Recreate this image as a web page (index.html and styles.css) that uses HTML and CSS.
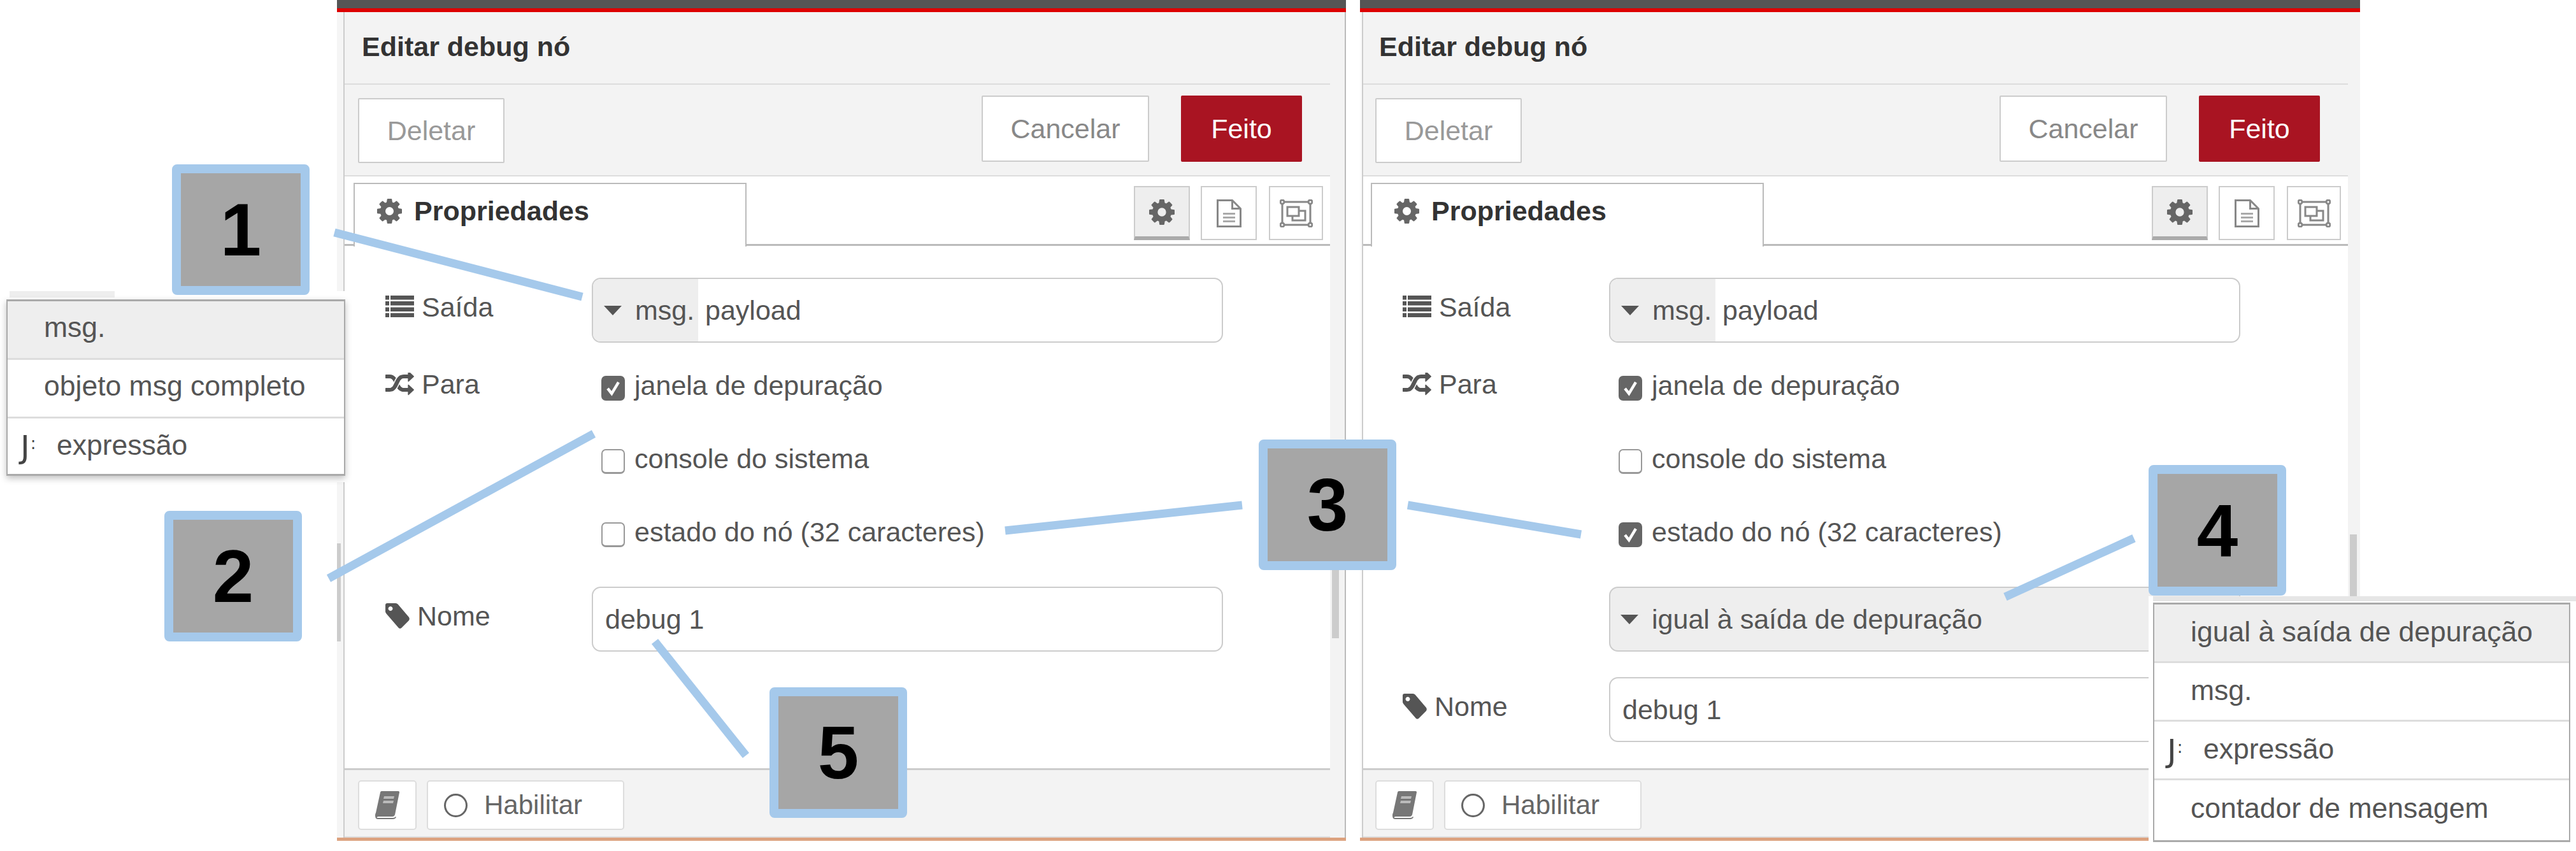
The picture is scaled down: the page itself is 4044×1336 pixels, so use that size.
FILE: index.html
```html
<!DOCTYPE html>
<html lang="pt">
<head>
<meta charset="utf-8">
<title>Editar debug nó</title>
<link rel="stylesheet" href="styles.css">
</head>
<body>
<svg width="0" height="0" class="defs" aria-hidden="true">
  <defs>
    <symbol id="cog" viewBox="0 0 1536 1536"><path d="M1024 768q0-106-75-181t-181-75-181 75-75 181 75 181 181 75 181-75 75-181zm512-109v222q0 12-8 23t-20 13l-185 28q-19 54-39 91 35 50 107 138 10 12 10 25t-9 23q-27 37-99 108t-94 71q-12 0-26-9l-138-108q-44 23-91 38-16 136-29 186-7 28-36 28h-222q-14 0-24.500-8.500t-11.500-21.500l-28-184q-49-16-90-37l-141 107q-10 9-25 9-14 0-25-11-126-114-165-168-7-10-7-23 0-12 8-23 15-21 51-66.500t54-70.500q-27-50-41-99l-183-27q-13-2-21-12.500t-8-23.500v-222q0-12 8-23t19-13l186-28q14-46 39-92-40-57-107-138-10-12-10-24 0-10 9-23 26-36 98.500-107.500t94.500-71.500q13 0 26 10l138 107q44-23 91-38 16-136 29-186 7-28 36-28h222q14 0 24.500 8.500t11.500 21.500l28 184q49 16 90 37l142-107q9-9 24-9 13 0 25 10 129 119 165 170 7 8 7 22 0 12-8 23-15 21-51 66.500t-54 70.500q26 50 41 98l183 28q13 2 21 12.500t8 23.500z"/></symbol>
    <symbol id="list" viewBox="0 0 45 34"><path d="M0 0h6v6.500H0zM8 0h37v6.500H8zM0 9h6v6.500H0zM8 9h37v6.500H8zM0 18.500h6V25H0zM8 18.500h37V25H8zM0 27.500h6V34H0zM8 27.500h37V34H8z"/></symbol>
    <symbol id="random" viewBox="0 128 1792 1536" preserveAspectRatio="none"><path d="M666 481q-60 92-137 273-22-45-37-72.500t-40.500-63.500-51-56.500-63-35-81.500-14.500h-224q-14 0-23-9t-9-23v-192q0-14 9-23t23-9h224q250 0 410 225zm1126 799q0 14-9 23l-320 320q-9 9-23 9-13 0-22.500-9.500t-9.500-22.500v-192q-32 0-85 .5t-81 1-73-1-71-5-64-10.500-63-18.500-58-28.500-59-40-55-53.500-56-69.500q59-93 136-273 22 45 37 72.500t40.500 63.500 51 56.500 63 35 81.500 14.500h256v-192q0-14 9-23t23-9q12 0 24 10l319 319q9 9 9 23zm0-896q0 14-9 23l-320 320q-9 9-23 9-13 0-22.500-9.500t-9.500-22.500v-192h-256q-48 0-87 15t-69 45-51 61.500-45 77.500q-32 62-78 171-29 66-49.500 111t-54 105-64 100-74 83-90 68.500-106.500 42-128 16.500h-224q-14 0-23-9t-9-23v-192q0-14 9-23t23-9h224q48 0 87-15t69-45 51-61.500 45-77.500q32-62 78-171 29-66 49.500-111t54-105 64-100 74-83 90-68.500 106.500-42 128-16.500h256v-192q0-14 9-23t23-9q12 0 24 10l319 319q9 9 9 23z"/></symbol>
    <symbol id="tag" viewBox="0 0 38 40"><path fill-rule="evenodd" d="M3 0h13c2 0 3 1 4 2l17 20c1 2 1 3 0 5L25 39c-1 1-3 1-4 0L2 17c-1-1-2-3-2-4V3c0-2 1-3 3-3zM8 5a3.500 3.500 0 1 0 .01 0z"/></symbol>
    <symbol id="book" viewBox="0 0 38 44"><path d="M10 0h26c2 0 2 1 2 2l-7 35c-1 2-2 3-4 3H5c-2 0-3 2-2 2h25c2 0 3-1 4-2l1 1c-1 2-3 3-5 3H4c-3 0-4-3-4-6 0-1 0-2 1-4L8 2c0-1 1-2 2-2z"/><path d="M14 8h16l-1 4H13zM13 15h16l-1 4H12z" fill="#bbb"/></symbol>
    <symbol id="doc" viewBox="0 0 39 44"><path d="M1.500 1.500h23l13 13v28h-36zM24.500 1.500v13h13" fill="none" stroke="#888" stroke-width="3"/><path d="M10 21h19v3H10zM10 27h19v3H10zM10 33h19v3H10z" fill="#aaa"/></symbol>
    <symbol id="group" viewBox="0 0 52 44"><g fill="none" stroke="#888" stroke-width="3"><path d="M6 4h40M6 40h40M4 6v32M48 6v32"/><circle cx="4" cy="4" r="3"/><circle cx="48" cy="4" r="3"/><circle cx="4" cy="40" r="3"/><circle cx="48" cy="40" r="3"/><path d="M12 12h18v14H12z"/><path d="M30 18h10v15H20v-7"/></g></symbol>
    <symbol id="tick" viewBox="0 0 37 38"><path d="M9 20l7 9L28 9" fill="none" stroke="#fff" stroke-width="5"/></symbol>
  </defs>
</svg>

<main class="stage">
  <section class="panel panel-a">
    <div class="bar"></div>
    <div class="body">
      <div class="gutter-left"><span class="thumb thumb-left"></span></div>
      <div class="main">
        <header class="head">Editar debug nó</header>
        <div class="toolbar">
          <button class="btn btn-delete">Deletar</button>
          <div class="actions">
            <button class="btn btn-cancel">Cancelar</button>
            <button class="btn btn-done">Feito</button>
          </div>
        </div>
        <div class="tabs">
          <div class="tab"><svg class="ic-tab"><use href="#cog"/></svg>Propriedades</div>
          <div class="tab-tools">
            <span class="tool tool-on"><svg class="ic-cog"><use href="#cog"/></svg></span>
            <span class="tool"><svg class="ic-doc"><use href="#doc"/></svg></span>
            <span class="tool tool-last"><svg class="ic-group"><use href="#group"/></svg></span>
          </div>
        </div>
        <form class="form">
          <div class="row row-first">
            <div class="label"><svg class="ic-list"><use href="#list"/></svg>Saída</div>
            <div class="field"><span class="prefix"><i class="caret"></i>msg.</span><span class="value">payload</span></div>
          </div>
          <div class="row row-checks">
            <div class="label label-check"><svg class="ic-random"><use href="#random"/></svg>Para</div>
            <div class="checks">
              <div class="check"><span class="box box-on"><svg><use href="#tick"/></svg></span>janela de depuração</div>
              <div class="check"><span class="box"></span>console do sistema</div>
              <div class="check"><span class="box"></span>estado do nó (32 caracteres)</div>
            </div>
          </div>
          <div class="row row-name">
            <div class="label"><svg class="ic-tag"><use href="#tag"/></svg>Nome</div>
            <div class="field field-plain"><span class="value">debug 1</span></div>
          </div>
        </form>
        <footer class="foot">
          <span class="foot-btn foot-book"><svg class="ic-book"><use href="#book"/></svg></span>
          <span class="foot-btn foot-enable"><i class="ring"></i>Habilitar</span>
        </footer>
      </div>
      <div class="gutter-right"><span class="thumb thumb-right"></span></div>
    </div>
    <div class="edge"></div>
  </section>

  <section class="panel panel-b">
    <div class="bar"></div>
    <div class="body">
      <div class="gutter-left"></div>
      <div class="main">
        <header class="head">Editar debug nó</header>
        <div class="toolbar">
          <button class="btn btn-delete">Deletar</button>
          <div class="actions">
            <button class="btn btn-cancel">Cancelar</button>
            <button class="btn btn-done">Feito</button>
          </div>
        </div>
        <div class="tabs">
          <div class="tab"><svg class="ic-tab"><use href="#cog"/></svg>Propriedades</div>
          <div class="tab-tools">
            <span class="tool tool-on"><svg class="ic-cog"><use href="#cog"/></svg></span>
            <span class="tool"><svg class="ic-doc"><use href="#doc"/></svg></span>
            <span class="tool tool-last"><svg class="ic-group"><use href="#group"/></svg></span>
          </div>
        </div>
        <form class="form">
          <div class="row row-first">
            <div class="label"><svg class="ic-list"><use href="#list"/></svg>Saída</div>
            <div class="field"><span class="prefix"><i class="caret"></i>msg.</span><span class="value">payload</span></div>
          </div>
          <div class="row row-checks">
            <div class="label label-check"><svg class="ic-random"><use href="#random"/></svg>Para</div>
            <div class="checks">
              <div class="check"><span class="box box-on"><svg><use href="#tick"/></svg></span>janela de depuração</div>
              <div class="check"><span class="box"></span>console do sistema</div>
              <div class="check"><span class="box box-on"><svg><use href="#tick"/></svg></span>estado do nó (32 caracteres)</div>
            </div>
          </div>
          <div class="row row-select">
            <div class="label"></div>
            <div class="field field-select"><i class="caret"></i>igual à saída de depuração</div>
          </div>
          <div class="row row-name-b">
            <div class="label"><svg class="ic-tag"><use href="#tag"/></svg>Nome</div>
            <div class="field field-plain"><span class="value">debug 1</span></div>
          </div>
        </form>
        <footer class="foot">
          <span class="foot-btn foot-book"><svg class="ic-book"><use href="#book"/></svg></span>
          <span class="foot-btn foot-enable"><i class="ring"></i>Habilitar</span>
        </footer>
      </div>
      <div class="gutter-right"><span class="thumb thumb-right-b"></span></div>
    </div>
    <div class="edge"></div>
  </section>

  <svg class="lines" width="4044" height="1336" aria-hidden="true">
    <g stroke="#a5c9eb" stroke-width="13" fill="none">
      <path d="M525 365L914 466"/>
      <path d="M516 908L932 681"/>
      <path d="M1578 833L1950 793"/>
      <path d="M2210 793L2482 839"/>
      <path d="M3350 845L3148 937"/>
      <path d="M1028 1007L1171 1186"/>
    </g>
  </svg>

  <div class="popup popup-a">
    <span class="sliver"></span>
    <ul class="menu menu-a">
      <li class="item item-on">msg.</li>
      <li class="item">objeto msg completo</li>
      <li class="item item-j"><span class="j">J<small>:</small></span>expressão</li>
    </ul>
  </div>
  <div class="popup popup-b">
    <ul class="menu menu-b">
      <li class="item item-on">igual à saída de depuração</li>
      <li class="item">msg.</li>
      <li class="item item-j"><span class="j">J<small>:</small></span>expressão</li>
      <li class="item">contador de mensagem</li>
    </ul>
  </div>

  <div class="badge badge-1">1</div>
  <div class="badge badge-2">2</div>
  <div class="badge badge-3">3</div>
  <div class="badge badge-4">4</div>
  <div class="badge badge-5">5</div>
</main>
</body>
</html>
```
FILE: styles.css
```css
* { box-sizing: border-box; }
html, body { margin: 0; padding: 0; background: #fff; }
body { font-family: "Liberation Sans", Arial, sans-serif; font-size: 43px; color: #555; }
.defs { position: absolute; }
svg { display: block; flex: none; fill: currentColor; }

.stage { position: relative; width: 4044px; height: 1336px; overflow: hidden; display: flex; align-items: flex-start; padding-left: 529px; gap: 22px; }

.panel { height: 1320px; display: flex; flex-direction: column; flex: none; }
.panel-a { width: 1584px; }
.panel-b { width: 1570px; }
.bar { height: 19px; flex: none; background: #555; border-bottom: 6px solid #dd0000; }
.body { flex: 1; display: flex; min-height: 0; }
.edge { height: 5px; flex: none; background: #dca27f; }

.gutter-left { flex: none; background: #f5f5f5; border-right: 2px solid #ccc; position: relative; }
.panel-a .gutter-left { width: 12px; }
.panel-b .gutter-left { width: 5px; background: #fafafa; }
.gutter-right { flex: none; background: #f3f3f3; position: relative; }
.panel-a .gutter-right { width: 25px; border-right: 2px solid #bbb; box-shadow: inset -3px 0 0 #f3f3f3; }
.panel-b .gutter-right { width: 19px; }
.thumb { position: absolute; background: #ccc; }
.thumb-left { left: 0; top: 834px; width: 6px; height: 154px; }
.thumb-right { left: 3px; top: 845px; width: 11px; height: 138px; }
.thumb-right-b { left: 3px; top: 820px; width: 11px; height: 150px; }

.main { flex: 1; min-width: 0; display: flex; flex-direction: column; background: #fff; }

.head { height: 114px; flex: none; background: #f3f3f3; border-bottom: 2px solid #ddd; font-weight: 700; color: #333; padding: 31px 0 0 27px; line-height: 46px; }
.panel-b .head { padding-left: 25px; }

.toolbar { height: 144px; flex: none; background: #f3f3f3; border-bottom: 2px solid #ddd; display: flex; justify-content: space-between; align-items: flex-start; padding: 21px 44px 0 21px; }
.panel-b .toolbar { padding-left: 19px; }
.actions { display: flex; gap: 50px; margin-top: -4px; }
.btn { font: inherit; border: 2px solid #ccc; background: #fff; color: #999; padding: 0; display: block; border-radius: 2px; }
.btn-delete { width: 230px; height: 102px; }
.btn-cancel { width: 263px; height: 104px; color: #888; }
.btn-done { width: 190px; height: 104px; color: #fff; background: #a91422; border-color: #a91422; }

.tabs { height: 109px; flex: none; display: flex; justify-content: space-between; align-items: flex-start; padding: 10px 11px 0 14px; border-bottom: 3px solid #bbb; }
.panel-b .tabs { padding-left: 12px; }
.tab { width: 617px; height: 100px; background: #fff; border: 2px solid #bbb; border-bottom: 0; margin-bottom: -3px; position: relative; font-weight: 700; color: #333; display: flex; align-items: flex-start; padding: 18px 0 0 35px; line-height: 49px; }
.ic-tab { width: 39px; height: 39px; margin: 5px 19px 0 0; color: #666; }
.tab-tools { display: flex; margin-top: 5px; }
.tool { width: 88px; height: 85px; border: 2px solid #ccc; background: #fff; display: flex; align-items: center; justify-content: center; margin-right: 19px; }
.tool-on { background: #eee; border-bottom: 6px solid #aaa; margin-right: 17px; }
.tool-last { width: 85px; margin-right: 0; }
.ic-cog { width: 40px; height: 40px; color: #666; }
.ic-doc { width: 39px; height: 44px; }
.ic-group { width: 52px; height: 44px; }

.form { flex: 1; min-height: 0; padding: 0 0 0 64px; background: #fff; }
.panel-b .form { padding-left: 62px; }
.row { display: flex; width: 1315px; }
.row-first { margin-top: 50px; }
.row-checks { margin-top: 13px; }
.row-name { margin-top: 25px; }
.row-select { margin-top: 25px; }
.row-name-b { margin-top: 40px; }
.label { width: 324px; flex: none; display: flex; align-items: center; padding-bottom: 10px; gap: 12px; }
.label-check { align-items: flex-start; padding: 28px 0 0; height: 115px; }
.ic-list { width: 45px; height: 34px; margin-top: -3px; }
.ic-random { width: 45px; height: 36px; margin-top: 6px; }
.ic-tag { width: 38px; height: 40px; color: #555; }

.field { flex: 1; height: 102px; border: 2px solid #ccc; border-radius: 14px; display: flex; align-items: center; overflow: hidden; background: #fff; }
.prefix { width: 165px; height: 100%; background: #eee; display: flex; align-items: center; padding-left: 17px; flex: none; }
.value { padding-left: 11px; }
.field-plain .value { padding-left: 19px; }
.caret { display: block; flex: none; width: 0; height: 0; border-left: 14px solid transparent; border-right: 14px solid transparent; border-top: 15px solid #555; margin-right: 21px; }
.field-select { background: #eee; padding-left: 16px; }

.checks { flex: 1; padding-left: 15px; }
.check { height: 115px; display: flex; align-items: center; gap: 15px; padding-bottom: 6px; }
.box { width: 37px; height: 39px; border: 2px solid #999; border-bottom-width: 3px; border-radius: 7px; background: #fff; flex: none; margin-top: 7px; }
.box svg { width: 33px; height: 34px; }
.box-on { background: #666; border-color: #666; }

.foot { height: 109px; flex: none; background: #f3f3f3; border-top: 3px solid #ccc; border-bottom: 2px solid #ddd; display: flex; align-items: flex-start; gap: 16px; padding: 16px 0 0 21px; }
.panel-b .foot { padding-left: 19px; }
.foot-btn { height: 78px; background: #fff; border: 2px solid #ddd; border-radius: 5px; display: flex; align-items: center; color: #666; font-size: 42px; }
.foot-book { width: 92px; justify-content: center; }
.ic-book { width: 38px; height: 44px; color: #777; }
.foot-enable { width: 310px; padding-left: 25px; gap: 26px; }
.ring { display: block; width: 37px; height: 37px; border: 3px solid #666; border-radius: 50%; flex: none; }

.lines { position: absolute; left: 0; top: 0; }

.popup { position: absolute; background: #fff; }
.popup-a { left: 0; top: 457px; width: 555px; height: 300px; padding: 13px 13px 0 10px; }
.sliver { position: absolute; left: 15px; top: 0; width: 165px; height: 10px; background: #eee; }
.popup-b { left: 3373px; top: 936px; width: 671px; height: 400px; padding-left: 7px; }
.popup-b::before { content: ""; position: absolute; left: 7px; right: 0; top: 0; height: 8px; background: #e6e6e6; }
.menu { list-style: none; margin: 0; padding: 0; border: 2px solid #aaa; border-top-width: 3px; background: #fff; position: relative; }
.menu-a { height: 277px; box-shadow: 0 4px 10px rgba(0, 0, 0, .25); border-bottom-width: 3px; }
.menu-b { width: 655px; height: 376px; top: 10px; border-bottom-width: 3px; }
.item { display: flex; align-items: center; border-bottom: 3px solid #ddd; padding-left: 57px; font-size: 44.500px; }
.menu-a .item { height: 92px; padding-bottom: 8px; }
.menu-b .item { height: 92px; padding-left: 57px; padding-bottom: 4px; }
.item:last-child { border-bottom: 0; }
.item-on { background: #eee; }
.item-j { padding-left: 20px !important; }
.j { font-family: "DejaVu Sans", sans-serif; font-weight: 400; font-size: 50px; line-height: 1; color: #444; width: 57px; flex: none; margin-top: 6px; }
.j small { font-size: 26px; vertical-align: 14px; margin-left: 1px; }

.badge { position: absolute; width: 216px; height: 205px; background: #a6a6a6; border: 14px solid #a5c9eb; border-radius: 8px; color: #000; font-weight: 700; font-size: 116px; line-height: 1; display: flex; align-items: center; justify-content: center; background-clip: padding-box; }
.badge-1 { left: 270px; top: 258px; }
.badge-2 { left: 258px; top: 802px; }
.badge-3 { left: 1976px; top: 690px; }
.badge-4 { left: 3373px; top: 730px; }
.badge-5 { left: 1208px; top: 1079px; }
```
